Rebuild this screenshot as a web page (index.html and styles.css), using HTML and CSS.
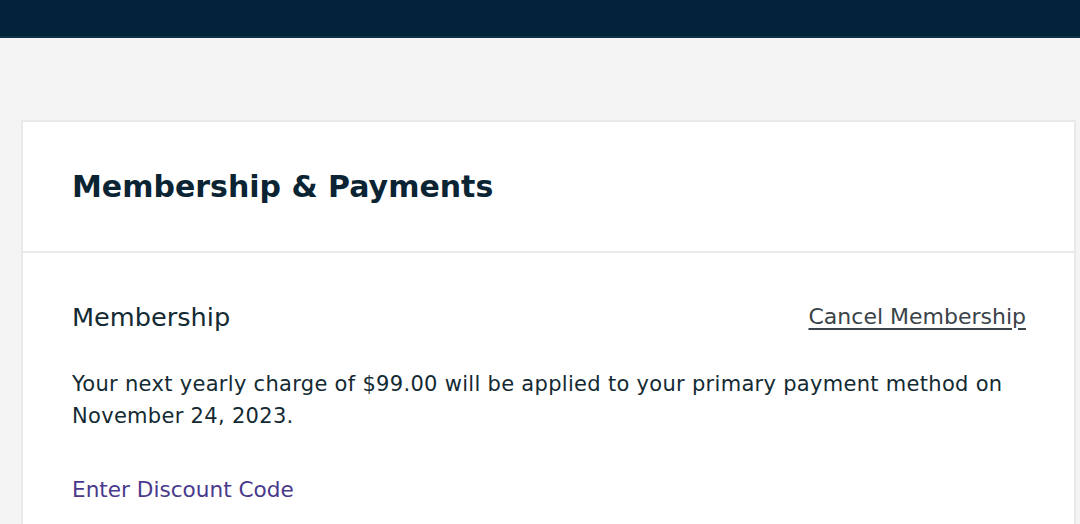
FILE: index.html
```html
<!DOCTYPE html>
<html lang="en">
<head>
<meta charset="utf-8">
<title>Membership &amp; Payments</title>
<link rel="stylesheet" href="styles.css">
</head>
<body>
<header class="topbar"></header>
<main class="page">
  <section class="card">
    <div class="card-head">
      <h1 class="card-title">Membership &amp; Payments</h1>
    </div>
    <div class="card-body">
      <div class="row">
        <h2 class="section-title">Membership</h2>
        <a class="cancel-link" href="#">Cancel Membership</a>
      </div>
      <p class="note">Your next yearly charge of $99.00 will be applied to your primary payment method on November 24, 2023.</p>
      <a class="discount-link" href="#">Enter Discount Code</a>
    </div>
  </section>
</main>
</body>
</html>
```
FILE: styles.css
```css
* { box-sizing: border-box; }
html, body { margin: 0; padding: 0; }
body {
  background: #f4f4f4;
  font-family: "DejaVu Sans", sans-serif;
  color: #132a33;
  height: 524px;
  overflow: hidden;
}
.topbar {
  height: 38px;
  background: #02233a;
  border-bottom: 2px solid #0f3246;
}
.page {
  padding: 82px 4px 0 21px;
}
.card {
  background: #fff;
  border: 2px solid #e9e9e9;
  border-bottom: none;
}
.card-head {
  height: 131px;
  padding: 0 0 0 49px;
  display: flex;
  align-items: center;
  border-bottom: 2px solid #e9e9e9;
}
.card-title {
  margin: 0;
  font-size: 30px;
  line-height: 36px;
  font-weight: 700;
  color: #0b2433;
}
.card-body {
  padding: 49px 48px 19px 49px;
}
.row {
  display: flex;
  justify-content: space-between;
  align-items: center;
}
.section-title {
  margin: 0;
  font-size: 25.6px;
  line-height: 30px;
  font-weight: 400;
  color: #132a33;
}
.cancel-link {
  font-size: 22px;
  line-height: 30px;
  color: #3a4347;
  text-decoration: underline;
  text-decoration-thickness: 2px;
  text-underline-offset: 4px;
}
.note {
  margin: 36px 0 0;
  font-size: 21px;
  line-height: 32px;
  letter-spacing: 0.3px;
  color: #132a33;
}
.discount-link {
  display: block;
  width: max-content;
  margin-top: 43px;
  font-size: 21.6px;
  line-height: 30px;
  color: #4a3a8c;
  text-decoration: none;
}
```
